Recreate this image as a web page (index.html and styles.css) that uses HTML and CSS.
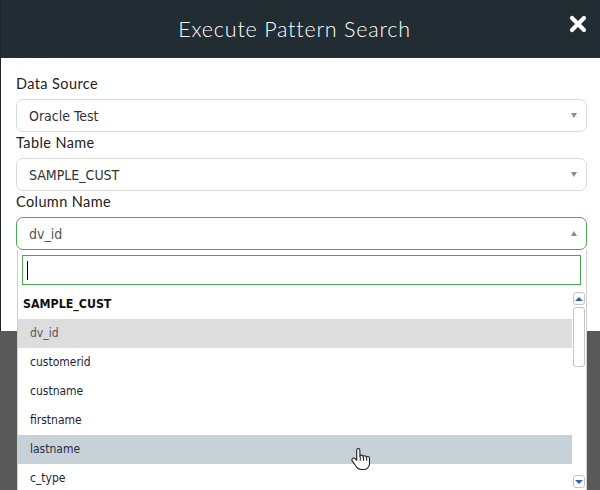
FILE: index.html
```html
<!DOCTYPE html>
<html>
<head>
<meta charset="utf-8">
<link rel="stylesheet" href="styles.css">
</head>
<body>
<div class="modal">
  <div class="modal-header">
    <span></span>
    <h1 class="title">Execute Pattern Search</h1>
    <svg class="close" width="18" height="18" viewBox="0 0 18 18">
      <path d="M3 3L15 15M15 3L3 15" stroke="#fff" stroke-width="4.2" stroke-linecap="round"/>
    </svg>
  </div>
  <div class="modal-body">
    <div class="group">
      <label class="label">Data Source</label>
      <div class="select"><span>Oracle Test</span><i class="arrow"></i></div>
    </div>
    <div class="group">
      <label class="label">Table Name</label>
      <div class="select"><span>SAMPLE_CUST</span><i class="arrow"></i></div>
    </div>
    <div class="group">
      <label class="label">Column Name</label>
      <div class="select open"><span class="muted">dv_id</span><i class="arrow up"></i></div>
    </div>
  </div>
  <div class="dropdown">
    <div class="search"><div class="search-input"><span class="caret"></span></div></div>
    <div class="results">
      <ul class="options">
        <li class="group-label">SAMPLE_CUST</li>
        <li class="option selected">dv_id</li>
        <li class="option">customerid</li>
        <li class="option">custname</li>
        <li class="option">firstname</li>
        <li class="option hover">lastname</li>
        <li class="option">c_type</li>
      </ul>
      <div class="scrollbar">
        <div class="sb-btn"><i class="sb-up"></i></div>
        <div class="sb-thumb"></div>
        <div class="sb-track"></div>
        <div class="sb-btn"><i class="sb-down"></i></div>
      </div>
    </div>
  </div>
  <svg class="hand" width="22" height="26" viewBox="0 0 22 26">
    <path d="M7.5 1.5c-1 0-1.8.8-1.8 1.8v10l-1.6-1.7c-.8-.8-2-.8-2.7 0-.6.6-.6 1.6-.1 2.3l3.8 5.6c1.3 1.9 3.1 3 5.2 3h2.4c3.2 0 5.8-2.6 5.8-5.8v-5.6c0-.9-.7-1.6-1.6-1.6s-1.6.7-1.6 1.6v-.8c0-.9-.7-1.6-1.6-1.6s-1.6.7-1.6 1.6v-.6c0-.9-.7-1.6-1.6-1.6s-1.6.7-1.6 1.6V3.3c0-1-.8-1.8-1.8-1.8z" fill="#fff" stroke="#222" stroke-width="1.1" stroke-linejoin="round"/>
    <path d="M9.3 9.6v4.2M12.5 10.2v3.6M15.7 11v3" stroke="#222" stroke-width="1"/>
  </svg>
</div>
</body>
</html>
```
FILE: styles.css
```css
* { box-sizing: border-box; }
html, body { margin: 0; padding: 0; }
body {
  width: 600px;
  height: 490px;
  overflow: hidden;
  background: #595959;
  font-family: "Lato", "Open Sans", sans-serif;
}
.modal {
  position: relative;
  height: 331px;
  background: #fff;
  border-left: 1px solid #1c2226;
}
.modal-header {
  height: 58px;
  background: #222d33;
  display: grid;
  grid-template-columns: 40px 1fr 40px;
  align-items: center;
}
.title {
  margin: 0;
  padding-right: 12px;
  text-align: center;
  color: #fff;
  font-family: "Lato", sans-serif;
  font-weight: 300;
  font-size: 21.5px;
  letter-spacing: 0.8px;
}
.close {
  justify-self: start;
  margin-left: 9px;
  margin-top: -10px;
}
.modal-body {
  padding: 16px 13px 0 15px;
}
.group { margin-bottom: 1px; }
.label {
  display: block;
  height: 20px;
  line-height: 20px;
  margin-bottom: 5px;
  font-size: 14.5px;
  letter-spacing: 0.4px;
  color: #222;
}
.select {
  height: 33px;
  border: 1px solid #d9d9d9;
  border-radius: 7px;
  display: flex;
  align-items: center;
  justify-content: space-between;
  padding: 0 9px 0 12px;
  font-family: "DejaVu Sans Condensed", "DejaVu Sans", sans-serif;
  font-size: 14px;
  color: #333;
}
.select.open { border-color: #4aa94f; }
.muted { color: #555; }
.arrow {
  width: 0; height: 0;
  border-left: 3.5px solid transparent;
  border-right: 3.5px solid transparent;
  border-top: 5px solid #8c8c8c;
}
.arrow.up {
  border-top: 0;
  border-bottom: 5px solid #8c8c8c;
}
.dropdown {
  position: absolute;
  left: 16px;
  top: 250px;
  width: 570px;
  height: 245px;
  background: #fff;
  border: 1px solid #cfcfcf;
  border-top: 0;
}
.search { padding: 5px 5px 4px 4px; }
.search-input {
  height: 30px;
  border: 1px solid #4aa94f;
  display: flex;
  align-items: center;
  padding-left: 4px;
}
.caret {
  width: 1px;
  height: 19px;
  background: #000;
}
.results {
  display: flex;
  height: 200px;
}
.options {
  flex: 1;
  list-style: none;
  margin: 0;
  padding: 0;
  font-family: "DejaVu Sans Condensed", "DejaVu Sans", sans-serif;
  font-size: 12px;
}
.group-label {
  height: 30px;
  line-height: 30px;
  padding-left: 5px;
  font-weight: bold;
  font-size: 12.3px;
  color: #111;
}
.option {
  height: 29px;
  line-height: 29px;
  padding-left: 12px;
  color: #1e1e38;
}
.option.selected { background: #dddddd; color: #555; }
.option.hover { background: #c6d2d7; color: #2c2c48; }
.scrollbar {
  width: 14px;
  display: flex;
  flex-direction: column;
  padding: 3px 1px 1px 1px;
  gap: 2px;
}
.sb-btn {
  height: 13px;
  border: 1px solid #c4c4c4;
  border-radius: 3px;
  display: flex;
  align-items: center;
  justify-content: center;
  background: #fff;
}
.sb-thumb {
  height: 60px;
  border: 1px solid #c4c4c4;
  border-radius: 3px;
}
.sb-track { flex: 1; }
.sb-up {
  width: 0; height: 0;
  border-left: 4px solid transparent;
  border-right: 4px solid transparent;
  border-bottom: 4px solid #2f5fc4;
}
.sb-down {
  width: 0; height: 0;
  border-left: 4px solid transparent;
  border-right: 4px solid transparent;
  border-top: 4px solid #2f5fc4;
}
.hand {
  position: absolute;
  left: 350px;
  top: 447px;
}
```
